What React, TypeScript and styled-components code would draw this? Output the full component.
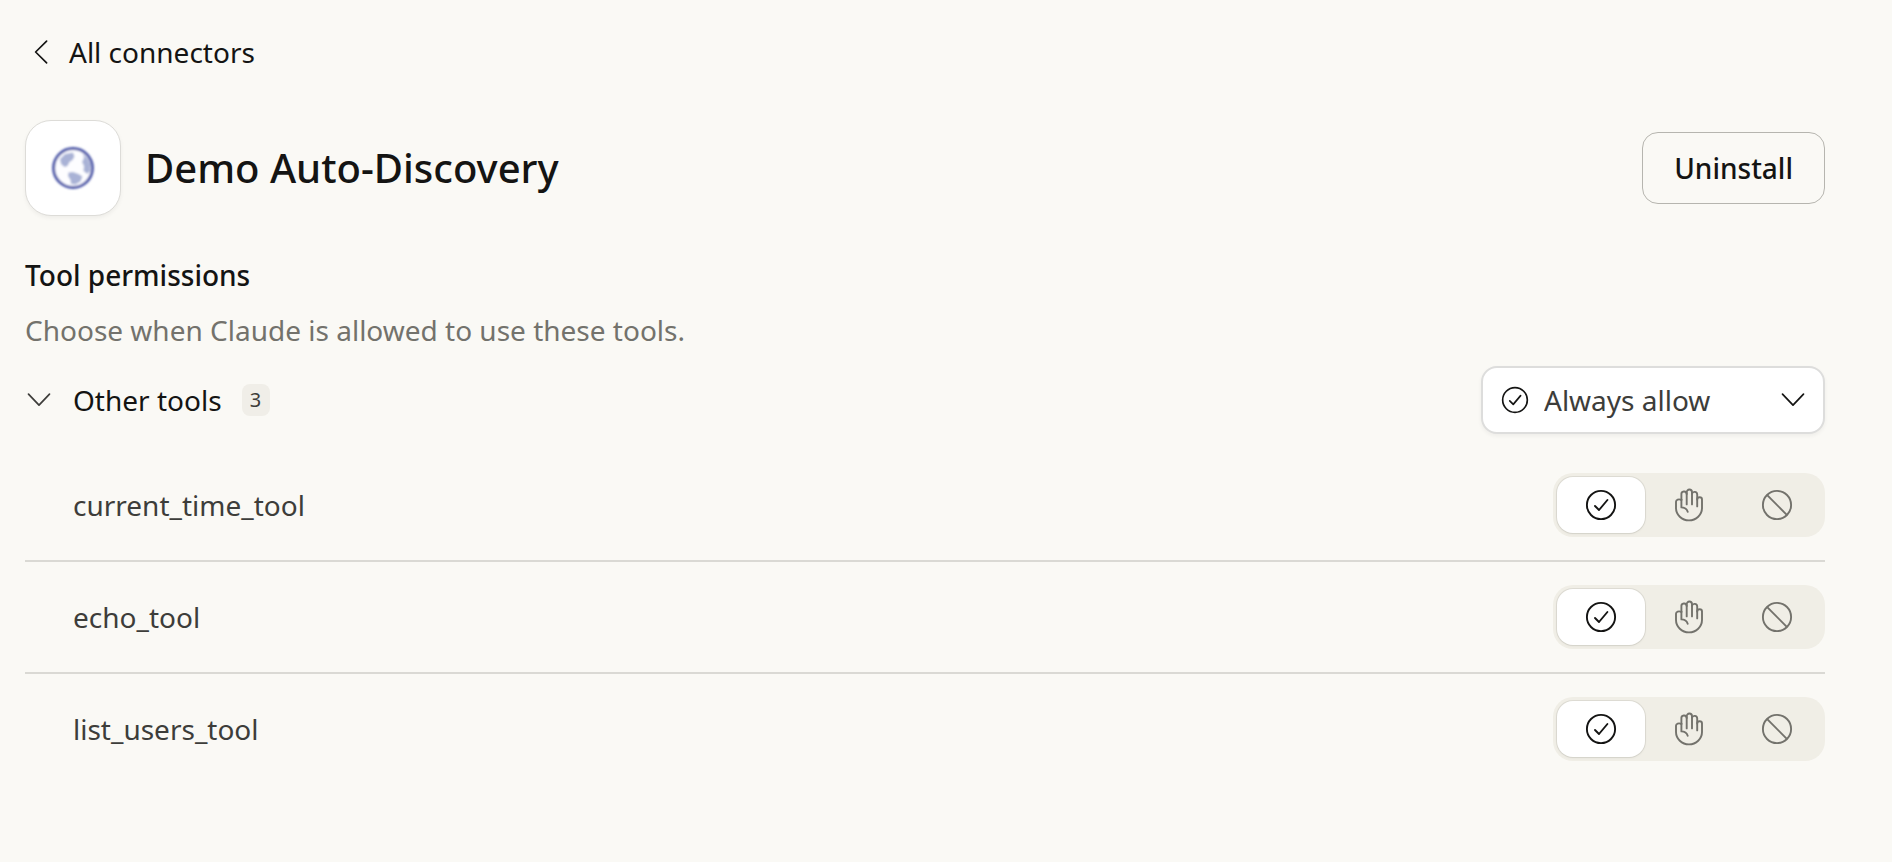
import React, { useState } from 'react';
import styled, { createGlobalStyle } from 'styled-components';

const GlobalStyle = createGlobalStyle`
  *, *::before, *::after { box-sizing: border-box; }
  body {
    margin: 0;
    background: #faf9f5;
    color: #141413;
    font-family: "Noto Sans", sans-serif;
    font-size: 28px;
    line-height: 40px;
  }
  button, select, input { font: inherit; color: inherit; }
`;

const Page = styled.main`
  padding: 32px 67px 32px 25px;
`;

const BackLink = styled.a`
  display: flex;
  align-items: center;
  gap: 20px;
  width: fit-content;
  padding-left: 8px;
  color: inherit;
  text-decoration: none;
`;

const Header = styled.header`
  display: flex;
  align-items: center;
  gap: 24px;
  margin-top: 48px;
`;

const LogoTile = styled.div`
  display: grid;
  place-items: center;
  width: 96px;
  height: 96px;
  border: 1px solid #dddcd8;
  border-radius: 26px;
  background: #fff;
  box-shadow: 0 2px 4px rgba(20, 20, 19, 0.05);
`;

const Title = styled.h1`
  flex: 1;
  margin: 0;
  font-size: 40px;
  line-height: 48px;
  font-weight: 500;
`;

const UninstallButton = styled.button`
  height: 72px;
  padding: 0 31px;
  border: 1px solid #b6b5af;
  border-radius: 16px;
  background: transparent;
  font-weight: 500;
  cursor: pointer;
`;

const SectionTitle = styled.h2`
  margin: 39px 0 0;
  font-size: 28px;
  line-height: 40px;
  font-weight: 500;
`;

const Description = styled.p`
  margin: 15px 0 0;
  color: #73726c;
`;

const GroupBar = styled.div`
  display: flex;
  align-items: center;
  justify-content: space-between;
  margin-top: 16px;
`;

const GroupToggle = styled.button`
  display: flex;
  align-items: center;
  gap: 20px;
  padding: 0;
  border: 0;
  background: none;
  cursor: pointer;
`;

const ChevronBox = styled.span`
  display: flex;
  align-items: center;
  justify-content: flex-start;
  width: 28px;
  height: 32px;
  padding-left: 2px;
  color: #3d3d3a;
`;

const Count = styled.span`
  display: grid;
  place-items: center;
  width: 28px;
  height: 32px;
  border-radius: 8px;
  background: #f0eee8;
  color: #3d3d3a;
  font-size: 20px;
  line-height: 32px;
`;

const SelectField = styled.label`
  display: grid;
  grid-template-columns: 20px 28px 1fr 24px 20px;
  align-items: center;
  width: 344px;
  height: 68px;

  & > select { grid-area: 1 / 1 / 2 / 6; }
  & > svg { z-index: 1; pointer-events: none; }
  & > svg:first-of-type { grid-area: 1 / 2 / 2 / 3; }
  & > svg:last-of-type { grid-area: 1 / 4 / 2 / 5; }
`;

const Select = styled.select`
  width: 100%;
  height: 100%;
  padding: 0 56px 0 61px;
  border: 2px solid #dddddc;
  border-radius: 16px;
  background: #fff;
  color: #3d3d3a;
  appearance: none;
  box-shadow: 0 2px 4px rgba(20, 20, 19, 0.05);
  cursor: pointer;
`;

const ToolList = styled.ul`
  margin: 16px 0 0;
  padding: 0;
  list-style: none;
`;

const ToolRow = styled.li`
  display: flex;
  align-items: center;
  justify-content: space-between;
  padding: 23px 0 23px 48px;
  color: #3d3d3a;

  & + & { border-top: 2px solid #dad9d4; }
`;

const Segments = styled.div`
  display: flex;
  padding: 4px;
  border-radius: 20px;
  background: #f0eee6;
`;

const Segment = styled.label<{ $active: boolean }>`
  position: relative;
  display: grid;
  place-items: center;
  width: 88px;
  height: 56px;
  border-radius: 16px;
  color: ${(p) => (p.$active ? '#141413' : '#73726c')};
  background: ${(p) => (p.$active ? '#fff' : 'transparent')};
  box-shadow: ${(p) => (p.$active ? '0 0 0 1px rgba(20, 20, 19, 0.08), 0 1px 3px rgba(20, 20, 19, 0.06)' : 'none')};
  cursor: pointer;

  &:focus-within { outline: 2px solid #2c84db; }
`;

const SegmentInput = styled.input`
  position: absolute;
  inset: 0;
  margin: 0;
  opacity: 0;
  cursor: pointer;
`;

function ChevronLeft() {
  return (
    <svg width="16" height="26" viewBox="0 0 16 26" fill="none" stroke="currentColor" strokeWidth="1.7" strokeLinecap="round" strokeLinejoin="round" aria-hidden="true">
      <path d="M13.6 2.2 2.6 13l11 10.8" />
    </svg>
  );
}

function ChevronDown() {
  return (
    <svg width="24" height="16" viewBox="0 0 24 16" fill="none" stroke="currentColor" strokeWidth="1.7" strokeLinecap="round" strokeLinejoin="round" aria-hidden="true">
      <path d="M1.5 2.2 12 13.2 22.500 2.2" />
    </svg>
  );
}

function CheckIcon({ size, stroke }: { size: number; stroke: number }) {
  return (
    <svg width={size} height={size} viewBox="0 0 32 32" fill="none" stroke="currentColor" strokeWidth={stroke} strokeLinecap="round" strokeLinejoin="round" aria-hidden="true">
      <circle cx="16" cy="16" r="14.1" />
      <path d="M10 17 14 21 22.4 11" />
    </svg>
  );
}

function HandIcon() {
  return (
    <svg width="28" height="34" viewBox="0 0 28 34" fill="none" stroke="currentColor" strokeWidth="1.9" strokeLinecap="round" strokeLinejoin="round" aria-hidden="true">
      <path d="M6.4 12V6.4a2.65 2.65 0 0 1 5.3-.6V16.4" />
      <path d="M11.7 6V4.2a2.65 2.65 0 0 1 5.3 0V16.4" />
      <path d="M17 5.8a2.65 2.65 0 0 1 5.2.6V18.4" />
      <path d="M22.2 11.5c0-3.1 4.8-3.1 4.8 0V20a13 12.4 0 0 1-26 0v-6.2c0-2.2 2.6-3 5.4-2" />
      <path d="M6.4 11.8v7.6c3.2 0 5.4 1.6 6.3 4.4" />
    </svg>
  );
}

function BlockIcon() {
  return (
    <svg width="32" height="32" viewBox="0 0 32 32" fill="none" stroke="currentColor" strokeWidth="1.9" aria-hidden="true">
      <circle cx="16" cy="16" r="14.1" />
      <path d="M6.2 6.2 25.8 25.8" />
    </svg>
  );
}

function GlobeLogo() {
  return (
    <svg width="48" height="48" viewBox="0 0 48 48" aria-hidden="true">
      <defs>
        <filter id="soften" x="-10%" y="-10%" width="120%" height="120%">
          <feGaussianBlur stdDeviation="1" />
        </filter>
      </defs>
      <g filter="url(#soften)">
        <circle cx="24" cy="24" r="19.4" fill="#fdfdff" stroke="#4c57a8" strokeWidth="3" />
        <path fill="#a9b2d6" d="M11 15l5-5 8-1.500 1.500 4-2 3.500-3 2-2 4-3 1-3.500-3z" />
        <path fill="#a9b2d6" d="M34 10l5 5 2.500 6-.5 6-2.500 3-4-3 .5-5-2-4 2-4z" />
        <path fill="#a9b2d6" d="M19.500 28.500l4.500-.5 5.500 2 4 2.500-2 5-5 3-4.500-.5-.5-4-2.500-4z" />
      </g>
    </svg>
  );
}

const PERMISSIONS = [
  { value: 'allow', label: 'Always allow', icon: <CheckIcon size={32} stroke={1.9} /> },
  { value: 'ask', label: 'Needs approval', icon: <HandIcon /> },
  { value: 'block', label: 'Blocked', icon: <BlockIcon /> },
];

const TOOLS = ['current_time_tool', 'echo_tool', 'list_users_tool'];

function PermissionPicker({ tool, value, onChange }: { tool: string; value: string; onChange: (v: string) => void }) {
  return (
    <Segments role="radiogroup" aria-label={tool}>
      {PERMISSIONS.map((p) => (
        <Segment key={p.value} $active={p.value === value}>
          <SegmentInput
            type="radio"
            name={tool}
            value={p.value}
            aria-label={p.label}
            checked={p.value === value}
            onChange={() => onChange(p.value)}
          />
          {p.icon}
        </Segment>
      ))}
    </Segments>
  );
}

export default function App() {
  const [open, setOpen] = useState(true);
  const [perms, setPerms] = useState<Record<string, string>>(
    Object.fromEntries(TOOLS.map((t) => [t, 'allow'])),
  );
  const setAll = (v: string) => setPerms(Object.fromEntries(TOOLS.map((t) => [t, v])));

  return (
    <>
      <GlobalStyle />
      <Page>
        <BackLink href="#connectors">
          <ChevronLeft />
          All connectors
        </BackLink>
        <Header>
          <LogoTile>
            <GlobeLogo />
          </LogoTile>
          <Title>Demo Auto-Discovery</Title>
          <UninstallButton type="button">Uninstall</UninstallButton>
        </Header>
        <SectionTitle>Tool permissions</SectionTitle>
        <Description>Choose when Claude is allowed to use these tools.</Description>
        <GroupBar>
          <GroupToggle type="button" aria-expanded={open} onClick={() => setOpen(!open)}>
            <ChevronBox>
              <ChevronDown />
            </ChevronBox>
            Other tools
            <Count>{TOOLS.length}</Count>
          </GroupToggle>
          <SelectField>
            <Select
              aria-label="Permission for other tools"
              value={perms[TOOLS[0]]}
              onChange={(e) => setAll(e.target.value)}
            >
              {PERMISSIONS.map((p) => (
                <option key={p.value} value={p.value}>{p.label}</option>
              ))}
            </Select>
            <CheckIcon size={28} stroke={1.9} />
            <ChevronDown />
          </SelectField>
        </GroupBar>
        {open && (
          <ToolList>
            {TOOLS.map((tool) => (
              <ToolRow key={tool}>
                {tool}
                <PermissionPicker
                  tool={tool}
                  value={perms[tool]}
                  onChange={(v) => setPerms({ ...perms, [tool]: v })}
                />
              </ToolRow>
            ))}
          </ToolList>
        )}
      </Page>
    </>
  );
}
